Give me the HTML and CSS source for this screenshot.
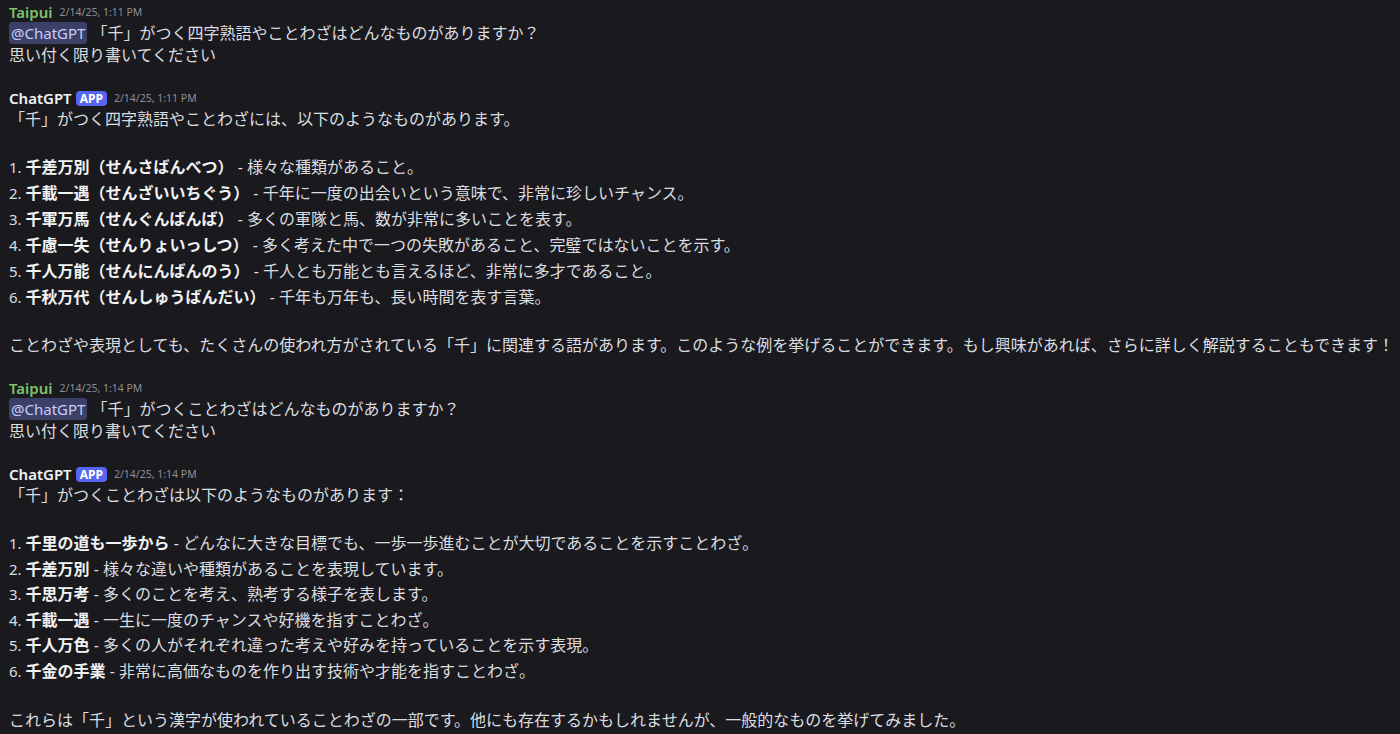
FILE: index.html
```html
<!DOCTYPE html>
<html lang="ja">
<head>
<meta charset="utf-8">
<link rel="stylesheet" href="styles.css">
</head>
<body>
<div class="chat">
  <div class="msg">
    <div class="head"><span class="name user">Taipui</span><span class="time">2/14/25, 1:11 PM</span></div>
    <div class="line"><span class="mention">@ChatGPT</span> 「千」がつく四字熟語やことわざはどんなものがありますか？</div>
    <div class="line">思い付く限り書いてください</div>
  </div>
  <div class="msg">
    <div class="head"><span class="name bot">ChatGPT</span><span class="badge">APP</span><span class="time">2/14/25, 1:11 PM</span></div>
    <div class="line">「千」がつく四字熟語やことわざには、以下のようなものがあります。</div>
    <ol class="list">
      <li><b>千差万別（せんさばんべつ）</b> - 様々な種類があること。</li>
      <li><b>千載一遇（せんざいいちぐう）</b> - 千年に一度の出会いという意味で、非常に珍しいチャンス。</li>
      <li><b>千軍万馬（せんぐんばんば）</b> - 多くの軍隊と馬、数が非常に多いことを表す。</li>
      <li><b>千慮一失（せんりょいっしつ）</b> - 多く考えた中で一つの失敗があること、完璧ではないことを示す。</li>
      <li><b>千人万能（せんにんばんのう）</b> - 千人とも万能とも言えるほど、非常に多才であること。</li>
      <li><b>千秋万代（せんしゅうばんだい）</b> - 千年も万年も、長い時間を表す言葉。</li>
    </ol>
    <div class="line">ことわざや表現としても、たくさんの使われ方がされている「千」に関連する語があります。このような例を挙げることができます。もし興味があれば、さらに詳しく解説することもできます！</div>
  </div>
  <div class="msg">
    <div class="head"><span class="name user">Taipui</span><span class="time">2/14/25, 1:14 PM</span></div>
    <div class="line"><span class="mention">@ChatGPT</span> 「千」がつくことわざはどんなものがありますか？</div>
    <div class="line">思い付く限り書いてください</div>
  </div>
  <div class="msg">
    <div class="head"><span class="name bot">ChatGPT</span><span class="badge">APP</span><span class="time">2/14/25, 1:14 PM</span></div>
    <div class="line">「千」がつくことわざは以下のようなものがあります：</div>
    <ol class="list list2">
      <li><b>千里の道も一歩から</b> - どんなに大きな目標でも、一歩一歩進むことが大切であることを示すことわざ。</li>
      <li><b>千差万別</b> - 様々な違いや種類があることを表現しています。</li>
      <li><b>千思万考</b> - 多くのことを考え、熟考する様子を表します。</li>
      <li><b>千載一遇</b> - 一生に一度のチャンスや好機を指すことわざ。</li>
      <li><b>千人万色</b> - 多くの人がそれぞれ違った考えや好みを持っていることを示す表現。</li>
      <li><b>千金の手業</b> - 非常に高価なものを作り出す技術や才能を指すことわざ。</li>
    </ol>
    <div class="line">これらは「千」という漢字が使われていることわざの一部です。他にも存在するかもしれませんが、一般的なものを挙げてみました。</div>
  </div>
</div>
</body>
</html>
```

FILE: styles.css
```css
html, body {
  margin: 0;
  padding: 0;
  background: #1a1a1e;
  overflow: hidden;
}
.chat {
  padding: 2px 0 0 9px;
  font-family: "Noto Sans", "Noto Sans CJK JP", sans-serif;
  font-size: 16px;
  color: #dbdee1;
  display: flex;
  flex-direction: column;
  gap: 22px;
}
.msg {
  display: flex;
  flex-direction: column;
}
.head {
  height: 20px;
  display: flex;
  align-items: center;
  white-space: nowrap;
}
.name {
  font-size: 15px;
  font-weight: 600;
}
.name.user { color: #7fc26b; }
.name.bot { color: #f2f3f5; }
.badge {
  margin-left: 4px;
  background: #5865f2;
  color: #fff;
  font-size: 12px;
  font-weight: 700;
  line-height: 15px;
  padding: 0 4px;
  border-radius: 4px;
}
.time {
  margin-left: 7px;
  font-size: 10.5px;
  color: #8a8e96;
}
.line {
  line-height: 22px;
  white-space: nowrap;
}
.mention {
  font-size: 15px;
  background: #3b4068;
  color: #c9cdfb;
  border-radius: 3px;
  padding: 1px 2px;
}
.list {
  margin: 24px 0;
  padding: 0;
  list-style: none;
  counter-reset: n;
}
.list li {
  line-height: 26px;
  white-space: nowrap;
  counter-increment: n;
}
.list li::before {
  content: counter(n) ". ";
  font-size: 15px;
}
.list2 {
  margin-top: 25px;
}
.list2 li { line-height: 25.6px; }
.list b { font-weight: 700; color: #f2f3f5; }
```
